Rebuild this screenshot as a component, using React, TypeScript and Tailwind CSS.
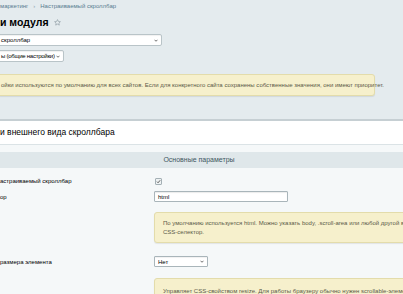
import React from 'react';

const Chevron: React.FC<{ className?: string }> = ({ className }) => (
  <svg viewBox="0 0 8 5" className={`shrink-0 ${className ?? ''}`} fill="none" stroke="#333" strokeWidth="1.4">
    <path d="M1 1l3 3 3-3" />
  </svg>
);

const Note: React.FC<{ className?: string; children: React.ReactNode }> = ({ className, children }) => (
  <div
    className={`rounded-[3px] border border-[#e3dcab] bg-[#f6f0cc] text-[6px] leading-[9px] text-[#5b5a48] shadow-[0_1px_1px_rgba(0,0,0,0.08)] ${className ?? ''}`}
  >
    {children}
  </div>
);

const App: React.FC = () => {
  return (
    <div className="w-[403px] h-[294px] overflow-hidden bg-[#e4ebee] font-['Liberation_Sans',Arial,sans-serif] text-black">
      <div className="pt-[2px] flex flex-col">
        <div className="h-[8px] flex items-center text-[6px] leading-[8px] text-[#587b8e] whitespace-nowrap">
          <span>маркетинг</span>
          <span className="ml-[5px] text-[#8ea2ac]">›</span>
          <span className="ml-[5px]">Настраиваемый скроллбар</span>
        </div>

        <div className="mt-[4px] h-[16px] flex items-center">
          <span className="text-[10.5px] leading-[16px] font-bold whitespace-nowrap">и модуля</span>
          <svg viewBox="0 0 12 12" className="ml-[5px] w-[7px] h-[7px]" fill="none" stroke="#8d9ba2" strokeWidth="1.1">
            <path d="M6 1l1.5 3.2 3.5.4-2.6 2.4.7 3.5L6 8.8 2.9 10.5l.7-3.5L1 4.6l3.5-.4z" />
          </svg>
        </div>

        <div className="mt-[4px] -ml-[2px] w-[164px] h-[12px] flex items-center justify-between rounded-[2px] border border-[#b9c4c8] bg-white pl-[2px] pr-[3px] shadow-[inset_0_1px_1px_rgba(0,0,0,0.06)]">
          <span className="text-[6px] leading-[8px] whitespace-nowrap">скроллбар</span>
          <Chevron className="w-[4px] h-[3px]" />
        </div>

        <div className="mt-[4px] -ml-[2px] w-[66px] h-[12px] flex items-center justify-between rounded-[2px] border border-[#b9c4c8] bg-white pl-[2px] pr-[3px] shadow-[inset_0_1px_1px_rgba(0,0,0,0.06)]">
          <span className="text-[6px] leading-[8px] tracking-[-0.25px] whitespace-nowrap">ы (общие настройки)</span>
          <Chevron className="w-[4px] h-[3px]" />
        </div>

        <Note className="mt-[12px] -ml-[3px] w-[378px] h-[22px] flex items-center pl-[3px] whitespace-nowrap">
          ойки используются по умолчанию для всех сайтов. Если для конкретного сайта сохранены собственные значения, они имеют приоритет.
        </Note>
      </div>

      <div className="mt-[23px] border-t-2 border-[#c6cfd3] bg-white">
        <div className="h-[24px] flex items-center border-b border-[#dbe3e6] text-[8.5px] whitespace-nowrap">
          и внешнего вида скроллбара
        </div>

        <div className="bg-[#f5f8f9] pt-[7px]">
          <div className="h-[16px] flex items-center justify-center pr-[5px] bg-[#dfe7ea] text-[7px] text-[#3e5660]">
            Основные параметры
          </div>

          <div className="grid grid-cols-[154px_1fr] text-[6px] leading-[8px]">
            <div className="mt-[6px] h-[14px] flex items-center whitespace-nowrap">астраиваемый скроллбар</div>
            <div className="mt-[6px] h-[14px] flex items-center pl-[1px]">
              <span className="w-[7px] h-[7px] flex items-center justify-center rounded-[1px] border border-[#a4b0b5] bg-[#eef2f3]">
                <svg viewBox="0 0 8 8" className="w-[5px] h-[5px]" fill="none" stroke="#555" strokeWidth="1.5">
                  <path d="M1.5 4.2l1.8 1.8 3.4-4" />
                </svg>
              </span>
            </div>

            <div className="mt-[3px] h-[11px] flex items-center whitespace-nowrap">ор</div>
            <div className="mt-[3px] h-[11px] w-[134px] flex items-center rounded-[1px] border border-[#a9b5ba] bg-white pl-[3px] shadow-[inset_0_1px_1px_rgba(0,0,0,0.08)]">
              html
            </div>

            <div />
            <Note className="mt-[10px] -mr-[20px] pt-[6px] pb-[5px] pl-[8px] whitespace-nowrap">
              <div>По умолчанию используется html. Можно указать body, .scroll-area или любой другой валидный</div>
              <div>CSS-селектор.</div>
            </Note>

            <div className="mt-[13px] h-[11px] flex items-center whitespace-nowrap">размера элемента</div>
            <div className="mt-[13px] h-[11px] w-[54px] flex items-center justify-between rounded-[1px] border border-[#a9b5ba] bg-white pl-[3px] pr-[3px] shadow-[inset_0_1px_1px_rgba(0,0,0,0.06)]">
              <span>Нет</span>
              <Chevron className="w-[4px] h-[3px]" />
            </div>

            <div />
            <Note className="mt-[11px] -mr-[20px] h-[30px] pt-[8px] pl-[8px] whitespace-nowrap">
              Управляет CSS-свойством resize. Для работы браузеру обычно нужен scrollable-элемент с overflow.
            </Note>
          </div>
        </div>
      </div>
    </div>
  );
};

export default App;
